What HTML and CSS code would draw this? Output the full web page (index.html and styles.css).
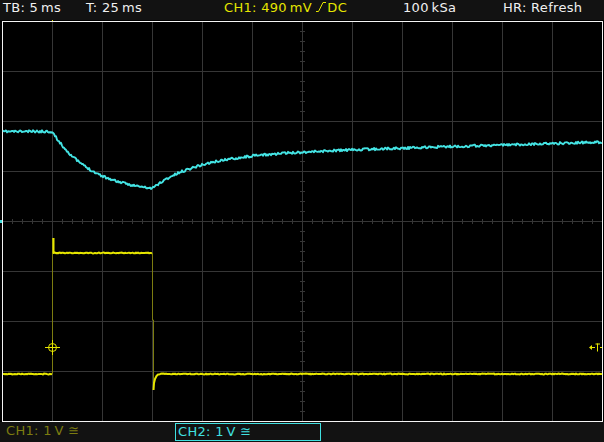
FILE: index.html
```html
<!DOCTYPE html>
<html lang="en">
<head>
  <meta charset="UTF-8" />
  <meta name="viewport" content="width=device-width, initial-scale=1.0" />
  <title>Scope display</title>
  <link rel="stylesheet" href="styles.css">
</head>
<body>

  <div class="topbar">
    <span class="tb">TB: 5&thinsp;ms</span>
    <span class="trig">T: 25&thinsp;ms</span>
    <span class="ch1">CH1: 490&thinsp;mV <svg class="edge" width="10" height="10" viewBox="0 0 10 10"><polyline points="0,9.5 2.5,9.5 7,0.5 10,0.5" fill="none" stroke="currentColor"/></svg>DC</span>
    <span class="rate">100&thinsp;kSa</span>
    <span class="mode">HR: Refresh</span>
  </div>

  <svg id="screen" class="screen" width="604" height="402" viewBox="0 20 604 402">
    <rect x="0" y="20" width="604" height="402" fill="#000"/>
    <path id="grid" fill="none" stroke="#363636"/>
    <rect x="2.5" y="21.5" width="600" height="400" fill="none" stroke="#f4f4f4"/>
    <g id="traces"></g>
    <!-- trigger position + centre markers -->
    <path d="M49.5 16.5H55.5L53 19V21H52V19Z" fill="#e6e600"/>
    <path d="M298.5 15.5H306.5L302.5 20Z" fill="none" stroke="#8a8a8a"/>
    <!-- CH2 offset marker -->
    <rect x="0" y="220" width="2" height="3" fill="#40e0e0"/>
    <!-- trigger level marker -->
    <g fill="#e6e600">
      <path d="M589 347.5L592 345V350Z"/>
      <rect x="592" y="347" width="3" height="1"/>
      <rect x="595.5" y="343.5" width="4.5" height="1"/>
      <rect x="597" y="343.5" width="1" height="8"/>
      <rect x="600" y="347" width="2" height="1"/>
    </g>
    <!-- cursor -->
    <g fill="none" stroke="#e6e600">
      <circle cx="52.5" cy="347.5" r="4"/>
      <path d="M45 347.5H60M52.5 340V355"/>
    </g>
  </svg>

  <div class="botbar">
    <span class="ch1-scale">CH1: 1&thinsp;V ≅</span>
    <span class="ch2-scale">CH2: 1&thinsp;V ≅</span>
  </div>

  <script src="scope.js"></script>
</body>
</html>
```

FILE: styles.css
```css
body {
  margin: 0;
  width: 604px;
  height: 442px;
  overflow: hidden;
  background: #121212;
  font-family: 'DejaVu Sans', sans-serif;
  font-size: 13px;
  line-height: 16px;
  letter-spacing: 0.3px;
}
.topbar {
  display: flex;
  height: 20px;
  padding-left: 3px;
  color: #f0f0f0;
}
.tb { width: 83px; }
.trig { width: 138px; }
.ch1 { width: 179px; color: #e6e600; }
.rate { width: 100px; }
.edge {
  margin: 0 1px 0 0;
  vertical-align: 0;
}
.screen {
  display: block;
}
.botbar {
  display: flex;
  height: 20px;
  padding-top: 1px;
  box-sizing: border-box;
}
.ch1-scale {
  width: 169px;
  padding-left: 6px;
  color: #7c7c10;
}
.ch2-scale {
  width: 146px;
  height: 18px;
  box-sizing: border-box;
  border: 1px solid #40e0e0;
  padding-left: 2px;
  color: #40e0e0;
}
```

FILE: scope.js
```js
// grid, centre ticks and the two channel traces
const NS = 'http://www.w3.org/2000/svg';
const traces = document.getElementById('traces');

// small seeded generator so the noise stays the same on every load
let seed = 11;
function rnd() {
  seed = (seed * 16807) % 2147483647;
  return seed / 2147483647;
}

function line(points, color, width) {
  const el = document.createElementNS(NS, 'polyline');
  el.setAttribute('points', points.map(p => p[0] + ',' + p[1].toFixed(2)).join(' '));
  el.setAttribute('fill', 'none');
  el.setAttribute('stroke', color);
  el.setAttribute('stroke-width', width);
  el.setAttribute('stroke-linejoin', 'round');
  traces.appendChild(el);
}

let d = '';
for (let x = 52; x < 602; x += 50) d += `M${x + .5} 21V421`;
for (let y = 71; y < 421; y += 50) d += `M2 ${y + .5}H602`;
for (let x = 12; x < 602; x += 10) if ((x - 2) % 50) d += `M${x + .5} 219V224`;
for (let y = 31; y < 421; y += 10) if ((y - 21) % 50) d += `M300 ${y + .5}H305`;
document.getElementById('grid').setAttribute('d', d);

// CH2: current step response
const ch2 = [];
for (let x = 3; x <= 602; x++) {
  let y;
  if (x <= 52) y = 131.5;
  else if (x <= 152) y = 131.5 + 62 * (1 - Math.exp(-(x - 52) / 40));
  else y = 188.5 - 33 * (1 - Math.exp(-(x - 152) / 45)) - 0.03 * (x - 152);
  ch2.push([x, y + (rnd() - 0.5) * 2.4]);
}
line(ch2, '#44e4e4', 1.9);

// CH1: the gate pulse, edges drawn dim
line([[52.5, 374], [52.5, 238]], '#7c7c10', 1);
line([[152.5, 253], [152.5, 320], [153.5, 320], [153.5, 390]], '#7c7c10', 1);

const low1 = [];
for (let x = 3; x <= 52; x++) low1.push([x, 374 + (rnd() - 0.5) * 0.9]);
line(low1, '#e6e600', 2);

const high = [[53.5, 238], [53.5, 253]];
for (let x = 55; x <= 152; x++) high.push([x, 253 + (rnd() - 0.5) * 0.9]);
line(high, '#e6e600', 2);

const low2 = [[153.5, 390], [154, 383], [155, 379], [156.5, 376], [158, 374.5]];
for (let x = 160; x <= 602; x++) low2.push([x, 374 + (rnd() - 0.5) * 0.9]);
line(low2, '#e6e600', 2);
```
